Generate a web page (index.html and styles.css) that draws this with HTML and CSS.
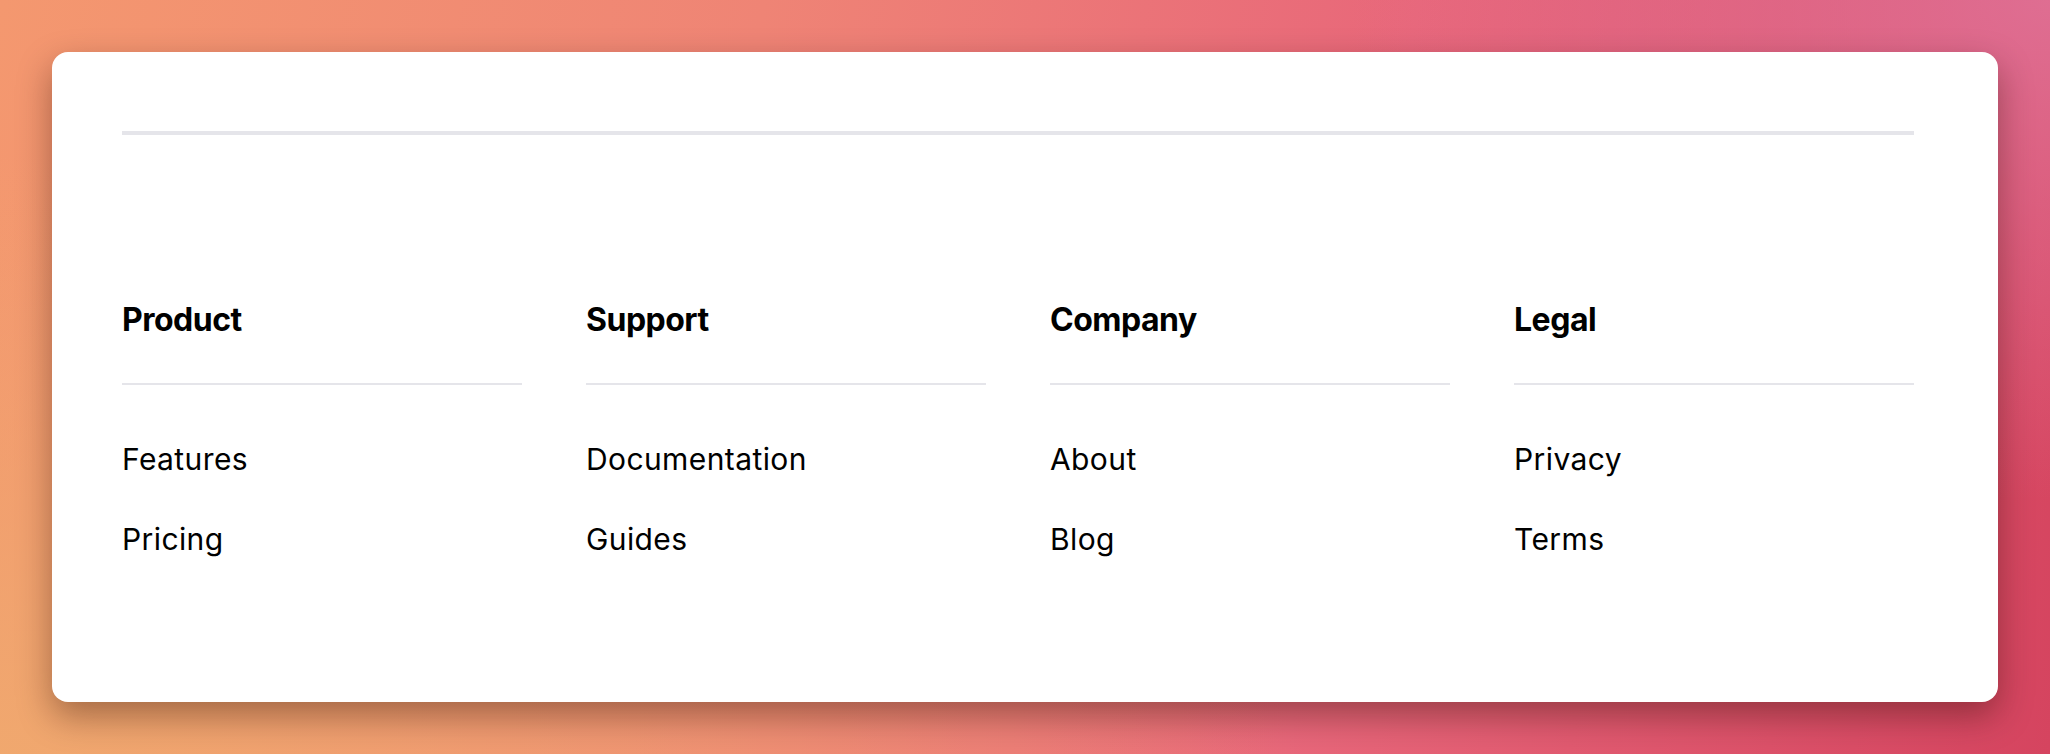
FILE: index.html
```html
<!DOCTYPE html>
<html lang="en">
<head>
<meta charset="utf-8">
<title>Footer</title>
<link rel="stylesheet" href="styles.css">
</head>
<body>
<div class="stage">
  <footer class="card">
    <div class="rule"></div>
    <div class="cols">
      <section class="col">
        <h3 class="col-title">Product</h3>
        <ul class="links">
          <li>Features</li>
          <li>Pricing</li>
        </ul>
      </section>
      <section class="col">
        <h3 class="col-title">Support</h3>
        <ul class="links">
          <li>Documentation</li>
          <li>Guides</li>
        </ul>
      </section>
      <section class="col">
        <h3 class="col-title">Company</h3>
        <ul class="links">
          <li>About</li>
          <li>Blog</li>
        </ul>
      </section>
      <section class="col">
        <h3 class="col-title">Legal</h3>
        <ul class="links">
          <li>Privacy</li>
          <li>Terms</li>
        </ul>
      </section>
    </div>
  </footer>
</div>
</body>
</html>
```

FILE: styles.css
```css
html, body {
  margin: 0;
  padding: 0;
  height: 100%;
}
body {
  font-family: Inter, "Liberation Sans", sans-serif;
  color: #000;
  overflow: hidden;
}
.stage {
  box-sizing: border-box;
  width: 2050px;
  height: 754px;
  padding: 52px;
  background:
    radial-gradient(ellipse 700px 500px at 100% 0%, rgba(224, 116, 154, 0.85), rgba(224, 116, 154, 0) 100%),
    radial-gradient(ellipse 1300px 600px at 0% 100%, rgba(240, 170, 110, 0.9), rgba(240, 170, 110, 0) 100%),
    linear-gradient(100deg, #f4986f 0%, #ef8475 35%, #e8677a 65%, #d5445f 100%);
}
.card {
  box-sizing: border-box;
  width: 1946px;
  height: 650px;
  background: #fff;
  border-radius: 16px;
  padding: 79px 84px 0 70px;
  box-shadow: 0 14px 34px rgba(40, 10, 0, 0.38);
}
.rule {
  height: 4px;
  background: #e5e5ea;
}
.cols {
  display: grid;
  grid-template-columns: repeat(4, 400px);
  column-gap: 64px;
  margin-top: 166px;
}
.col-title {
  margin: 0;
  font-size: 32px;
  line-height: 38px;
  font-weight: 700;
  letter-spacing: -0.5px;
  padding-bottom: 44px;
  border-bottom: 2px solid #e5e5ea;
}
.links {
  list-style: none;
  margin: 56px 0 0;
  padding: 0;
  display: flex;
  flex-direction: column;
  gap: 44px;
}
.links li {
  font-size: 30px;
  line-height: 36px;
  font-weight: 400;
  letter-spacing: 0.4px;
}
```
